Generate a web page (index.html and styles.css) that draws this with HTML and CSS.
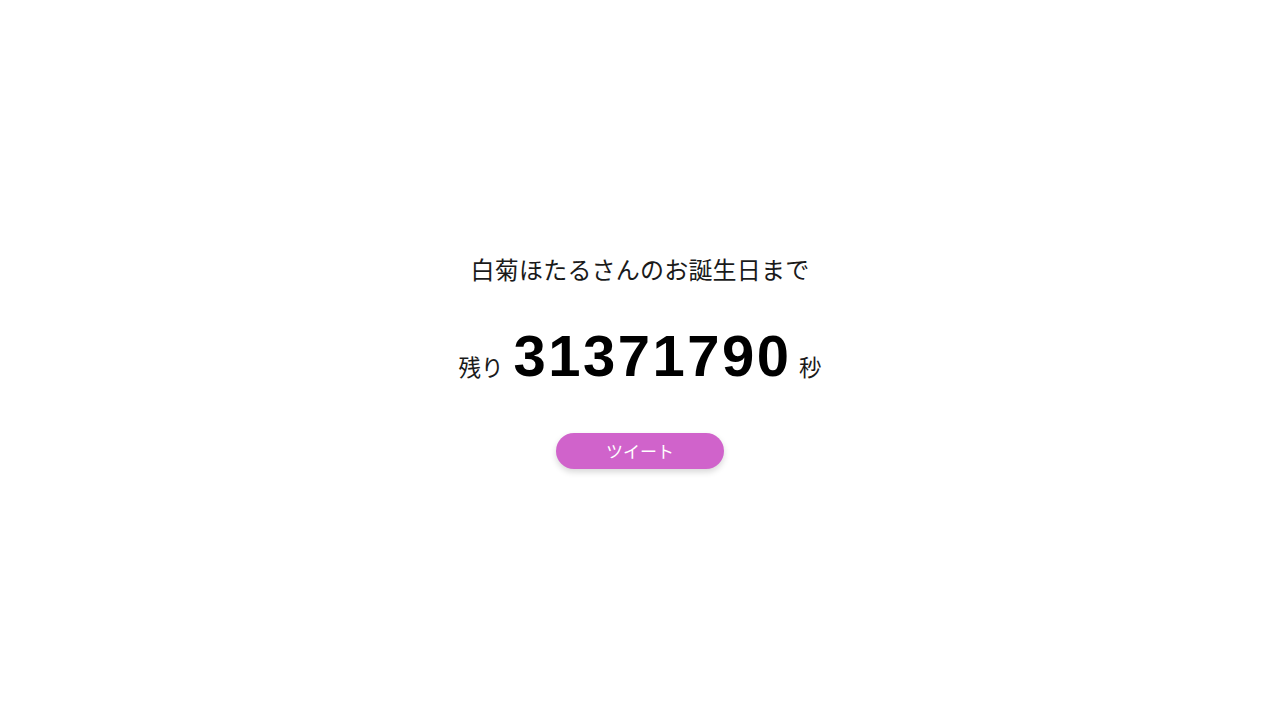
FILE: index.html
```html
<!DOCTYPE html>
<html lang="ja">
<head>
<meta charset="utf-8">
<title>白菊ほたるさんのお誕生日まで</title>
<link rel="stylesheet" href="styles.css">
</head>
<body>
<main class="page">
  <p class="title">白菊ほたるさんのお誕生日まで</p>
  <p class="count">
    <span class="unit">残り</span>
    <span class="num">31371790</span>
    <span class="unit">秒</span>
  </p>
  <button class="tweet" type="button">ツイート</button>
</main>
</body>
</html>
```

FILE: styles.css
```css
html, body {
  margin: 0;
  padding: 0;
  background: #ffffff;
}
body {
  font-family: "Noto Sans CJK JP", "Noto Sans", sans-serif;
  color: #111111;
}
.page {
  height: 720px;
  display: flex;
  flex-direction: column;
  align-items: center;
  justify-content: center;
}
.title {
  margin: 0;
  font-size: 24px;
  line-height: 34px;
  letter-spacing: 0.2px;
  color: #1a1a1a;
}
.count {
  margin: 34px 0 0;
  display: flex;
  align-items: baseline;
  gap: 10px;
  line-height: 72px;
}
.unit {
  font-size: 22.5px;
  color: #1a1a1a;
}
.num {
  font-family: "Liberation Sans", Arial, sans-serif;
  font-weight: 700;
  font-size: 58px;
  letter-spacing: 2.5px;
  margin-right: -2.5px;
  color: #000000;
}
.tweet {
  margin-top: 31px;
  width: 168px;
  height: 36px;
  border: none;
  border-radius: 18px;
  background: #d063cb;
  color: #ffffff;
  font-family: "Noto Sans CJK JP", sans-serif;
  font-size: 17px;
  font-weight: 400;
  box-shadow: 0 3px 6px rgba(0, 0, 0, 0.16);
}
```
